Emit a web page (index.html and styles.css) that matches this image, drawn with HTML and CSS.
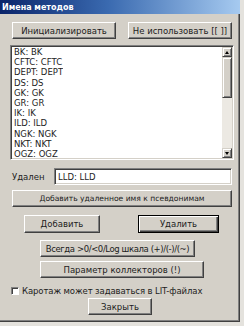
FILE: index.html
```html
<!DOCTYPE html>
<html lang="ru">
<head>
<meta charset="utf-8">
<title>Имена методов</title>
<link rel="stylesheet" href="styles.css">
</head>
<body>
<div class="window">
  <div class="titlebar"><span class="title">Имена методов</span></div>
  <div class="row row-top">
    <div class="btn btn-half">Инициализировать</div>
    <div class="btn btn-half">Не использовать [[ ]]</div>
  </div>
  <div class="listbox">
    <ul class="items">
      <li>BK: BK</li>
      <li>CFTC: CFTC</li>
      <li>DEPT: DEPT</li>
      <li>DS: DS</li>
      <li>GK: GK</li>
      <li>GR: GR</li>
      <li>IK: IK</li>
      <li>ILD: ILD</li>
      <li>NGK: NGK</li>
      <li>NKT: NKT</li>
      <li>OGZ: OGZ</li>
    </ul>
    <div class="scrollbar">
      <div class="sb-btn"><span class="arrow-up"></span></div>
      <div class="sb-thumb"></div>
      <div class="sb-track"></div>
      <div class="sb-btn"><span class="arrow-down"></span></div>
    </div>
  </div>
  <div class="row row-field">
    <span class="label">Удален</span>
    <div class="textbox">LLD: LLD</div>
  </div>
  <div class="btn btn-alias">Добавить удаленное имя к псевдонимам</div>
  <div class="row row-pair">
    <div class="btn btn-add">Добавить</div>
    <div class="btn btn-default btn-del">Удалить</div>
  </div>
  <div class="btn btn-always">Всегда &gt;0/&lt;0/Log шкала (+)/(-)/(~)</div>
  <div class="btn btn-param">Параметр коллекторов (!)</div>
  <div class="row row-check">
    <span class="checkbox"></span>
    <span class="check-label">Каротаж может задаваться в LIT-файлах</span>
  </div>
  <div class="btn btn-close">Закрыть</div>
</div>
</body>
</html>
```

FILE: styles.css
```css
html, body {
  margin: 0;
  padding: 0;
}
body {
  width: 244px;
  height: 326px;
  background: #e4e2dd;
  font-family: "DejaVu Sans", "Liberation Sans", sans-serif;
  font-size: 8.5px;
  color: #1c1c1c;
  overflow: hidden;
}
.window {
  width: 239px;
  height: 321px;
  background: #d4d0c8;
  border-right: 1px solid #404040;
  border-bottom: 1px solid #404040;
  box-shadow: inset -1px -1px #808080;
  display: flex;
  flex-direction: column;
  align-items: flex-start;
}
.titlebar {
  width: 240px;
  height: 14px;
  background: linear-gradient(to right, #0a246a, #3a6ab0 45%, #a6caf0);
  display: flex;
  align-items: center;
}
.title {
  color: #fff;
  font-weight: bold;
  font-size: 8px;
  padding-left: 2px;
  white-space: nowrap;
}
.row {
  display: flex;
  align-items: center;
}
.btn {
  box-sizing: border-box;
  height: 17px;
  display: flex;
  align-items: center;
  justify-content: center;
  white-space: nowrap;
  background: #d4d0c8;
  border: 1px solid;
  border-color: #ffffff #404040 #404040 #ffffff;
  box-shadow: inset -1px -1px #808080;
}
.btn-default {
  border: 1px solid #000;
  box-shadow: inset 1px 1px #fff, inset -1px -1px #404040, inset -2px -2px #808080;
}
.row-top {
  margin-top: 8px;
  margin-left: 12px;
  gap: 12px;
}
.btn-half {
  width: 104px;
}
.listbox {
  box-sizing: border-box;
  margin-top: 6px;
  margin-left: 10px;
  width: 224px;
  height: 115px;
  background: #fff;
  border: 1px solid;
  border-color: #808080 #fff #fff #808080;
  box-shadow: inset 1px 1px #404040, inset -1px -1px #d4d0c8;
  padding: 1px;
  display: flex;
  justify-content: space-between;
}
.items {
  list-style: none;
  margin: 0;
  padding: 0 0 0 2px;
  line-height: 10.2px;
  white-space: nowrap;
  overflow: hidden;
}
.items li {
  height: 10.2px;
}
.scrollbar {
  width: 10px;
  display: flex;
  flex-direction: column;
  background: #ece9e3;
}
.sb-btn, .sb-thumb {
  box-sizing: border-box;
  background: #d4d0c8;
  border: 1px solid;
  border-color: #d4d0c8 #404040 #404040 #d4d0c8;
  box-shadow: inset 1px 1px #fff, inset -1px -1px #808080;
}
.sb-btn {
  height: 10px;
  display: flex;
  align-items: center;
  justify-content: center;
}
.sb-thumb {
  height: 41px;
}
.sb-track {
  flex: 1;
}
.arrow-up {
  width: 0;
  height: 0;
  border-left: 2.5px solid transparent;
  border-right: 2.5px solid transparent;
  border-bottom: 3px solid #000;
}
.arrow-down {
  width: 0;
  height: 0;
  border-left: 2.5px solid transparent;
  border-right: 2.5px solid transparent;
  border-top: 3px solid #000;
}
.row-field {
  margin-top: 8px;
  margin-left: 12px;
}
.label {
  width: 42px;
}
.textbox {
  box-sizing: border-box;
  width: 178px;
  height: 17px;
  background: #fff;
  border: 1px solid;
  border-color: #808080 #fff #fff #808080;
  box-shadow: inset 1px 1px #404040, inset -1px -1px #d4d0c8;
  padding-left: 3px;
  display: flex;
  align-items: center;
}
.btn-alias {
  margin-top: 5px;
  margin-left: 12px;
  width: 220px;
  font-size: 7.6px;
}
.row-pair {
  margin-top: 8px;
  margin-left: 24px;
  gap: 38px;
}
.btn-add {
  width: 76px;
  height: 18px;
}
.btn-del {
  width: 81px;
  height: 18px;
}
.btn-always {
  margin-top: 7px;
  margin-left: 40px;
  width: 155px;
  letter-spacing: -0.4px;
}
.btn-param {
  margin-top: 4px;
  margin-left: 40px;
  width: 164px;
}
.row-check {
  margin-top: 8px;
  margin-left: 11px;
  gap: 3px;
  height: 9px;
}
.checkbox {
  box-sizing: border-box;
  width: 8px;
  height: 8px;
  background: #fff;
  border: 1px solid;
  border-color: #808080 #fff #fff #808080;
  box-shadow: inset 1px 1px #404040;
}
.check-label {
  white-space: nowrap;
  letter-spacing: -0.1px;
}
.btn-close {
  margin-top: 3px;
  margin-left: 88px;
  width: 64px;
}
```
